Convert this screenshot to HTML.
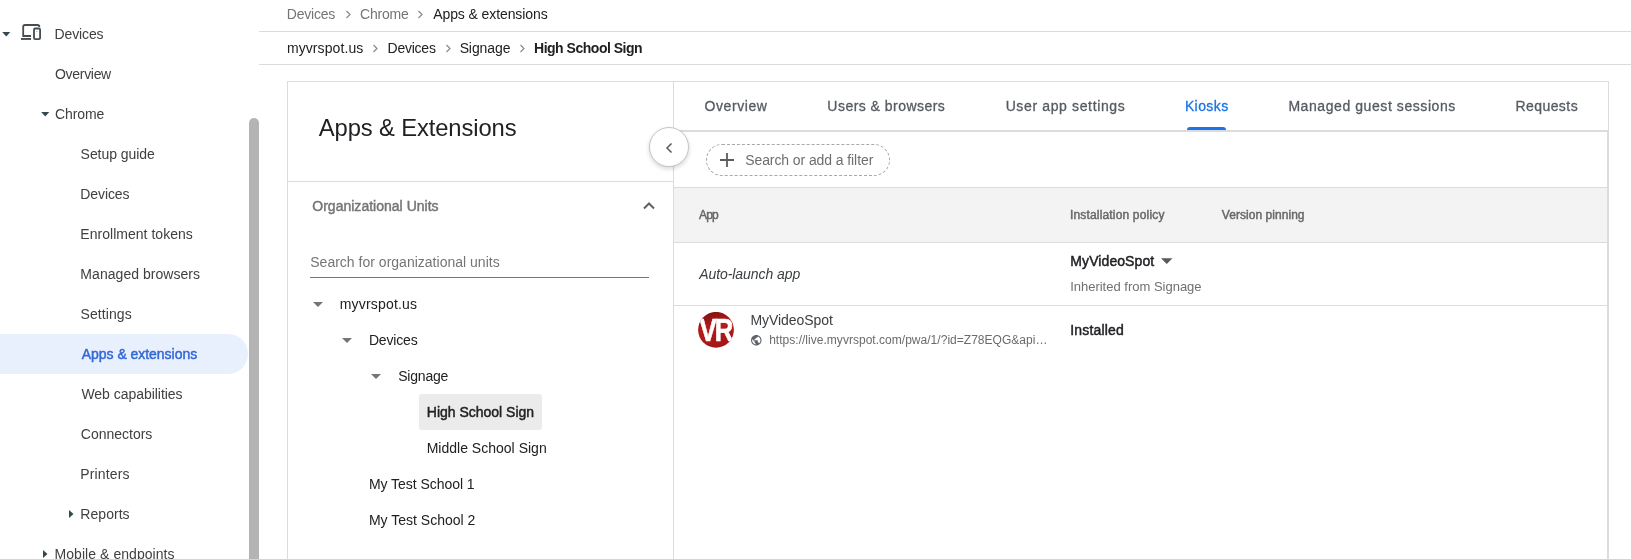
<!DOCTYPE html>
<html lang="en">
<head>
<meta charset="utf-8">
<title>Apps &amp; extensions</title>
<style>
html,body{margin:0;padding:0;}
body{will-change:transform;}
body{width:1631px;height:559px;overflow:hidden;background:#fff;position:relative;
 font-family:"Liberation Sans",sans-serif;font-size:14px;color:#3c4043;}
.t{position:absolute;white-space:nowrap;line-height:20px;height:20px;}
.abs{position:absolute;}
.nav{color:#404040;}
.tab{color:#565b61;-webkit-text-stroke:0.3px currentColor;}
.th{font-size:12px;color:#676767;}
.med{-webkit-text-stroke:0.45px currentColor;}
.sel{position:absolute;left:0;top:334px;width:248px;height:40px;background:#e8f0fe;border-radius:0 20px 20px 0;}
.scroll{position:absolute;left:249px;top:118px;width:10px;height:460px;background:#b4b4b4;border-radius:5px 5px 0 0;}
.hl{position:absolute;height:1px;background:#dcdcdc;}
.vl{position:absolute;width:1px;background:#dcdcdc;}
.gray{color:#757575;}
.blk{color:#202124;}
.b{font-weight:bold;}
</style>
</head>
<body>
<!-- SIDEBAR -->
<div class="sel"></div>
<div class="scroll"></div>
<svg class="abs" style="left:2px;top:32px" width="8.5" height="4.5" viewBox="0 0 9 5"><path d="M0 0h9L4.500 5z" fill="#37474f"/></svg>
<svg class="abs" style="left:19px;top:20px" width="24" height="24" viewBox="19 20 24 24"><g fill="none" stroke="#454c52" stroke-width="1.8"><path d="M39.400 27Q39.400 25 37.400 25H25Q23.200 25 23.200 26.800V36H31"/><rect x="34" y="28.500" width="6.100" height="10.600" rx="1.200"/></g><rect x="21" y="38" width="10" height="1.900" fill="#454c52"/><circle cx="36.800" cy="31.500" r="0.500" fill="#454c52" opacity="0.600"/></svg>
<span id="s0" class="t nav" style="left:54.57px;top:24px;letter-spacing:-0.130px;">Devices</span>
<span id="s1" class="t nav" style="left:55.03px;top:64px;letter-spacing:-0.305px;">Overview</span>
<svg class="abs" style="left:41px;top:112px" width="8.5" height="4.5" viewBox="0 0 9 5"><path d="M0 0h9L4.500 5z" fill="#37474f"/></svg>
<span id="s2" class="t nav" style="left:54.90px;top:104px;letter-spacing:-0.068px;">Chrome</span>
<span id="s3" class="t nav" style="left:80.61px;top:144px;letter-spacing:-0.061px;">Setup guide</span>
<span id="s4" class="t nav" style="left:80.36px;top:184px;letter-spacing:-0.106px;">Devices</span>
<span id="s5" class="t nav" style="left:80.36px;top:224px;letter-spacing:0.026px;">Enrollment tokens</span>
<span id="s6" class="t nav" style="left:80.36px;top:264px;letter-spacing:0.043px;">Managed browsers</span>
<span id="s7" class="t nav" style="left:80.61px;top:304px;letter-spacing:0.066px;">Settings</span>
<span id="s8" class="t nav med" style="left:81.78px;top:344px;letter-spacing:-0.037px;color:#3367d6">Apps &amp; extensions</span>
<span id="s9" class="t nav" style="left:81.39px;top:384px;letter-spacing:-0.032px;">Web capabilities</span>
<span id="s10" class="t nav" style="left:80.86px;top:424px;letter-spacing:-0.018px;">Connectors</span>
<span id="s11" class="t nav" style="left:80.36px;top:464px;letter-spacing:0.129px;">Printers</span>
<svg class="abs" style="left:69px;top:510px" width="4.500" height="8" viewBox="0 0 5 9"><path d="M0 0v9L5 4.500z" fill="#37474f"/></svg>
<span id="s12" class="t nav" style="left:80.36px;top:504px;letter-spacing:0.040px;">Reports</span>
<svg class="abs" style="left:43px;top:550px" width="4.500" height="8" viewBox="0 0 5 9"><path d="M0 0v9L5 4.500z" fill="#37474f"/></svg>
<span id="s13" class="t nav" style="left:54.57px;top:544px;letter-spacing:0.054px;">Mobile &amp; endpoints</span>

<!-- BREADCRUMBS -->
<span id="b0" class="t gray" style="left:286.74px;top:4px;letter-spacing:-0.206px;">Devices</span>
<span id="b1" class="t gray" style="left:360.02px;top:4px;letter-spacing:-0.229px;">Chrome</span>
<span id="b2" class="t blk" style="left:433.21px;top:4px;letter-spacing:-0.094px;">Apps &amp; extensions</span>
<svg class="abs" style="left:344.500px;top:10px" width="7" height="9" viewBox="0 0 7 9"><path d="M1.500 1l3.500 3.500-3.500 3.500" fill="none" stroke="#8a8a8a" stroke-width="1.200"/></svg>
<svg class="abs" style="left:417.300px;top:10px" width="7" height="9" viewBox="0 0 7 9"><path d="M1.500 1l3.500 3.500-3.500 3.500" fill="none" stroke="#8a8a8a" stroke-width="1.200"/></svg>
<div class="hl" style="left:259px;top:31px;width:1372px"></div>
<span id="b3" class="t blk" style="left:286.89px;top:38px;letter-spacing:0.100px;">myvrspot.us</span>
<span id="b4" class="t blk" style="left:387.59px;top:38px;letter-spacing:-0.247px;">Devices</span>
<span id="b5" class="t blk" style="left:459.64px;top:38px;letter-spacing:-0.095px;">Signage</span>
<span id="b6" class="t blk b" style="left:534.00px;top:38px;letter-spacing:-0.482px;">High School Sign</span>
<svg class="abs" style="left:372.300px;top:43.700px" width="7" height="9" viewBox="0 0 7 9"><path d="M1.500 1l3.500 3.500-3.500 3.500" fill="none" stroke="#8a8a8a" stroke-width="1.200"/></svg>
<svg class="abs" style="left:444.500px;top:43.700px" width="7" height="9" viewBox="0 0 7 9"><path d="M1.500 1l3.500 3.500-3.500 3.500" fill="none" stroke="#8a8a8a" stroke-width="1.200"/></svg>
<svg class="abs" style="left:518.700px;top:43.700px" width="7" height="9" viewBox="0 0 7 9"><path d="M1.500 1l3.500 3.500-3.500 3.500" fill="none" stroke="#8a8a8a" stroke-width="1.200"/></svg>
<div class="hl" style="left:259px;top:64px;width:1372px"></div>

<!-- CARD -->
<div class="abs" style="left:287px;top:81px;width:1320px;height:500px;border:1px solid #dcdcdc;"></div>
<div class="vl" style="left:673px;top:82px;height:480px"></div>
<div class="vl" style="left:1607px;top:131px;height:430px"></div>
<!-- left panel -->
<span id="l0" class="t blk" style="left:318.78px;top:111.5px;letter-spacing:-0.123px;font-size:23.8px;line-height:32px;height:32px">Apps &amp; Extensions</span>
<div class="hl" style="left:288px;top:181px;width:385px"></div>
<span id="l1" class="t gray med" style="left:312.26px;top:196px;letter-spacing:0.015px;">Organizational Units</span>
<svg class="abs" style="left:641.500px;top:200px" width="14" height="11" viewBox="0 0 14 11"><path d="M2 8.500L7 3.500l5 5" fill="none" stroke="#616161" stroke-width="2"/></svg>
<span id="l2" class="t gray" style="left:310.26px;top:252px;letter-spacing:0.010px;">Search for organizational units</span>
<div class="hl" style="left:310px;top:277px;width:339px;background:#757575"></div>

<svg class="abs" style="left:313px;top:302px" width="10" height="5" viewBox="0 0 10 5"><path d="M0 0h10L5 5z" fill="#757575"/></svg>
<span id="l3" class="t blk" style="left:339.76px;top:294px;letter-spacing:0.180px;">myvrspot.us</span>
<svg class="abs" style="left:342px;top:338px" width="10" height="5" viewBox="0 0 10 5"><path d="M0 0h10L5 5z" fill="#757575"/></svg>
<span id="l4" class="t blk" style="left:368.92px;top:330px;letter-spacing:-0.173px;">Devices</span>
<svg class="abs" style="left:371px;top:374px" width="10" height="5" viewBox="0 0 10 5"><path d="M0 0h10L5 5z" fill="#757575"/></svg>
<span id="l5" class="t blk" style="left:398.24px;top:366px;letter-spacing:-0.204px;">Signage</span>
<div class="abs" style="left:419px;top:394px;width:122.500px;height:35.500px;background:#ebebeb;border-radius:3px"></div>
<span id="l6" class="t blk med" style="left:426.83px;top:402px;letter-spacing:-0.011px;">High School Sign</span>
<span id="l7" class="t blk" style="left:426.68px;top:438px;letter-spacing:0.010px;">Middle School Sign</span>
<span id="l8" class="t blk" style="left:368.92px;top:474px;letter-spacing:-0.043px;">My Test School 1</span>
<span id="l9" class="t blk" style="left:368.92px;top:510px;letter-spacing:0.005px;">My Test School 2</span>

<!-- right panel -->
<span id="t0" class="t tab" style="left:704.44px;top:96px;letter-spacing:0.596px;">Overview</span>
<span id="t1" class="t tab" style="left:827.36px;top:96px;letter-spacing:0.469px;">Users &amp; browsers</span>
<span id="t2" class="t tab" style="left:1005.64px;top:96px;letter-spacing:0.637px;">User app settings</span>
<span id="t3" class="t tab" style="left:1184.88px;top:96px;letter-spacing:0.408px;color:#1a73e8">Kiosks</span>
<span id="t4" class="t tab" style="left:1288.40px;top:96px;letter-spacing:0.572px;">Managed guest sessions</span>
<span id="t5" class="t tab" style="left:1515.40px;top:96px;letter-spacing:0.442px;">Requests</span>
<div class="hl" style="left:674px;top:130px;width:934px;height:2px;background:#dcdcdc"></div>
<div class="abs" style="left:1186.500px;top:127px;width:39px;height:3px;background:#1a73e8;border-radius:3px 3px 0 0"></div>

<div class="abs" style="left:649px;top:127px;width:38px;height:38px;border-radius:50%;background:#fff;border:1px solid #c4c4c4;box-shadow:0 2px 4px rgba(0,0,0,.16)"></div>
<svg class="abs" style="left:664px;top:141.800px" width="10" height="12" viewBox="0 0 10 12"><path d="M7.500 1.500L3 6l4.500 4.500" fill="none" stroke="#5a5a5a" stroke-width="1.500"/></svg>

<div class="abs" style="left:706px;top:144px;width:182px;height:30px;border:1px dashed #a8a8a8;border-radius:16px"></div>
<svg class="abs" style="left:720px;top:153px" width="14" height="14" viewBox="0 0 14 14"><path d="M7 0v14M0 7h14" stroke="#5c5c5c" stroke-width="1.800"/></svg>
<span id="f0" class="t " style="left:745.20px;top:150px;letter-spacing:-0.088px;color:#6e6e6e">Search or add a filter</span>

<div class="abs" style="left:674px;top:187px;width:934px;height:56px;background:#f3f3f3;border-top:1px solid #dcdcdc;border-bottom:1px solid #dcdcdc;box-sizing:border-box"></div>
<div class="vl" style="left:1607px;top:131px;height:430px"></div>
<span id="h0" class="t th med" style="left:699.01px;top:205px;letter-spacing:-0.808px;">App</span>
<span id="h1" class="t th med" style="left:1070.00px;top:205px;letter-spacing:0.167px;">Installation policy</span>
<span id="h2" class="t th med" style="left:1221.87px;top:205px;letter-spacing:0.043px;">Version pinning</span>

<span id="r0" class="t " style="left:699.19px;top:264px;letter-spacing:-0.065px;font-style:italic;color:#3c4043">Auto-launch app</span>
<span id="r1" class="t blk med" style="left:1070.37px;top:251px;letter-spacing:0.076px;">MyVideoSpot</span>
<svg class="abs" style="left:1161px;top:258px" width="11.500" height="6" viewBox="0 0 12 6"><path d="M0 0h12L6 6z" fill="#5a5a5a"/></svg>
<span id="r2" class="t " style="left:1070.14px;top:277px;letter-spacing:-0.004px;font-size:13px;color:#707070">Inherited from Signage</span>
<div class="hl" style="left:674px;top:305px;width:934px"></div>

<svg class="abs" style="left:698px;top:312px" width="36" height="36" viewBox="0 0 36 36">
 <defs><linearGradient id="vr" x1="0.2" y1="0" x2="0.5" y2="1"><stop offset="0" stop-color="#7c1010"/><stop offset="0.450" stop-color="#b81a1a"/><stop offset="1" stop-color="#a41616"/></linearGradient><clipPath id="vc"><circle cx="18" cy="17.800" r="17.900"/></clipPath></defs>
 <circle cx="18" cy="17.800" r="17.900" fill="url(#vr)"/>
 <g clip-path="url(#vc)"><text transform="translate(1.500,29.300) scale(0.830,1)" font-family="Liberation Sans, sans-serif" font-weight="bold" font-size="31" fill="#fff" stroke="#fff" stroke-width="0.700" letter-spacing="-2.200">VR</text></g>
</svg>
<span id="r3" class="t " style="left:750.44px;top:310px;letter-spacing:-0.054px;color:#3c4043">MyVideoSpot</span>
<svg class="abs" style="left:750.200px;top:334px" width="12.600" height="12.600" viewBox="0 0 24 24"><path fill="#5f6368" d="M12 2C6.480 2 2 6.480 2 12s4.480 10 10 10 10-4.480 10-10S17.520 2 12 2zm-1 17.930c-3.950-.49-7-3.850-7-7.930 0-.62.080-1.210.210-1.790L9 15v1c0 1.100.9 2 2 2v1.930zm6.900-2.540c-.26-.81-1-1.390-1.900-1.390h-1v-3c0-.55-.45-1-1-1H8v-2h2c.55 0 1-.45 1-1V7h2c1.100 0 2-.9 2-2v-.41c2.930 1.190 5 4.060 5 7.410 0 2.080-.8 3.970-2.100 5.390z"/></svg>
<span id="r4" class="t " style="left:769.16px;top:330px;letter-spacing:0.025px;font-size:12px;color:#6b6b6b">https://live.myvrspot.com/pwa/1/?id=Z78EQG&amp;api…</span>
<span id="r5" class="t blk med" style="left:1070.28px;top:320px;letter-spacing:0.172px;">Installed</span>
</body>
</html>
